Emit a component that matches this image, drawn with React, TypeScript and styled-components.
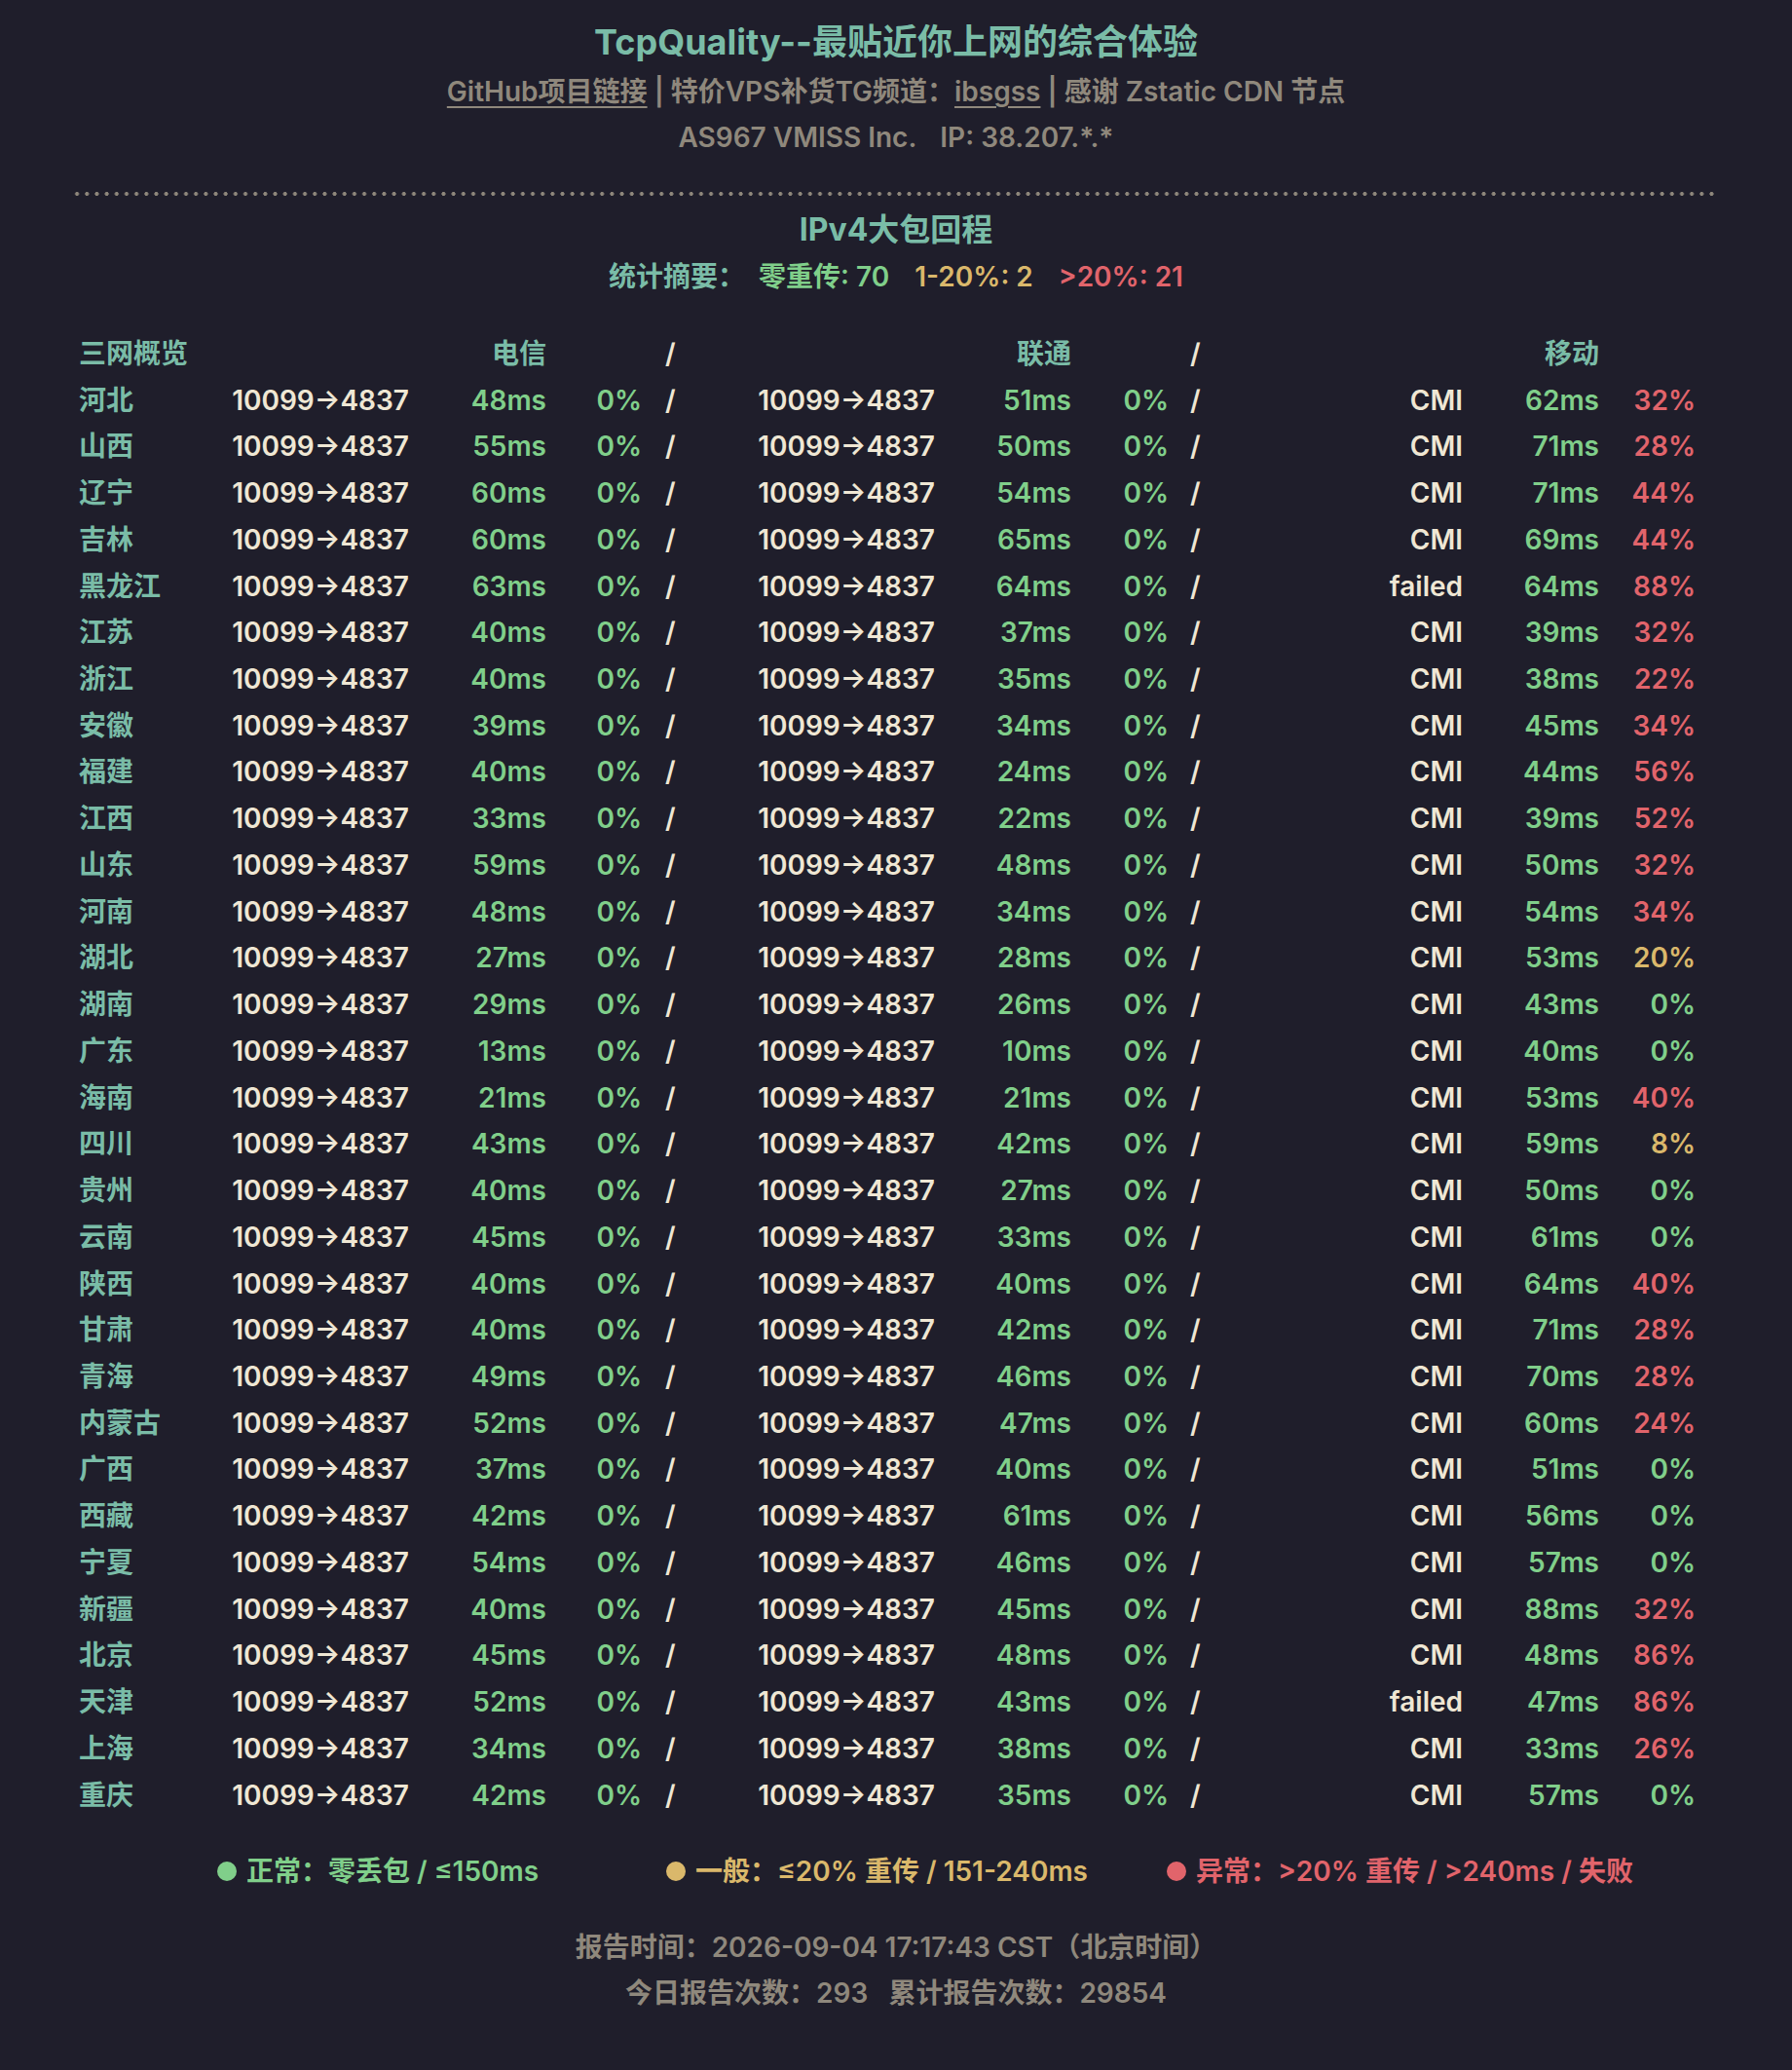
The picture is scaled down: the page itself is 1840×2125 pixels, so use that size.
import React from "react";
import styled, { createGlobalStyle } from "styled-components";

const C = {
  bg: "#1f1e2b",
  teal: "#7abca7",
  green: "#80cf8a",
  yellow: "#dab86b",
  red: "#e1646b",
  cream: "#efe7d4",
  gray: "#8f887c",
};

const Global = createGlobalStyle`
  html, body { margin: 0; padding: 0; background: ${C.bg}; }
  body {
    font-family: Inter, "Noto Sans CJK SC", "Noto Sans", sans-serif;
    font-weight: 600;
    -webkit-font-smoothing: antialiased;
  }
`;

const Page = styled.main`
  min-height: 2125px;
  box-sizing: border-box;
  background: ${C.bg};
  padding-top: 17px;
`;

const Title = styled.h1`
  margin: 0;
  text-align: center;
  font-size: 36px;
  line-height: 52px;
  font-weight: 700;
  color: ${C.teal};
`;

const InfoLine = styled.div<{ $mt?: number }>`
  margin-top: ${(p) => p.$mt ?? 0}px;
  text-align: center;
  font-size: 28px;
  line-height: 47px;
  color: ${C.gray};
  white-space: pre;
`;

const Link = styled.a`
  color: ${C.gray};
  text-decoration: underline;
  text-decoration-thickness: 2px;
  text-underline-offset: 5px;
`;

const Sep = styled.span`
  color: ${C.gray};
`;

const Spaced = styled.span`
  margin-left: 24px;
`;

const Divider = styled.div`
  margin: 32px 80px 0 74px;
  height: 4px;
  background-image: radial-gradient(circle at center, ${C.gray} 1.7px, transparent 2.3px);
  background-size: 10.18px 4px;
  background-repeat: repeat-x;
`;

const SectionTitle = styled.h2`
  margin: 11px 0 0;
  text-align: center;
  font-size: 32px;
  line-height: 48px;
  font-weight: 700;
  color: ${C.teal};
`;

const Summary = styled.div`
  margin-top: 1px;
  display: flex;
  justify-content: center;
  gap: 26px;
  font-size: 28px;
  line-height: 47px;
`;

const Tone = styled.span<{ $c: string; $mr?: number }>`
  color: ${(p) => p.$c};
  margin-right: ${(p) => p.$mr ?? 0}px;
  white-space: pre;
`;

const Table = styled.div`
  margin: 31px 0 0 81px;
  display: grid;
  grid-template-columns: 155px 184px 141px 98px 117px 184px 140px 100px 117px 185px 140px 99px;
  grid-auto-rows: 47.74px;
  align-items: center;
  font-size: 28px;
  line-height: 34px;
`;

const Cell = styled.div<{ $c: string; $right?: boolean; $pad?: number }>`
  color: ${(p) => p.$c};
  text-align: ${(p) => (p.$right ? "right" : "left")};
  padding-left: ${(p) => p.$pad ?? 0}px;
  white-space: nowrap;
`;

const Legend = styled.div`
  margin: 31px 0 0 223px;
  display: grid;
  grid-template-columns: 461px 514px auto;
  font-size: 28px;
  line-height: 47px;
`;

const LegendItem = styled.div<{ $c: string }>`
  display: flex;
  align-items: center;
  gap: 10px;
  color: ${(p) => p.$c};
  white-space: pre;
`;

const Dot = styled.span<{ $c: string }>`
  width: 20px;
  height: 20px;
  border-radius: 50%;
  background: ${(p) => p.$c};
  flex: none;
`;

const Footer = styled.div`
  margin-top: 31px;
  text-align: center;
  font-size: 28px;
  line-height: 47px;
  color: ${C.gray};
`;

type Row = [string, number, number, number, number, string, number, number];

const rows: Row[] = [
  ["河北", 48, 0, 51, 0, "CMI", 62, 32],
  ["山西", 55, 0, 50, 0, "CMI", 71, 28],
  ["辽宁", 60, 0, 54, 0, "CMI", 71, 44],
  ["吉林", 60, 0, 65, 0, "CMI", 69, 44],
  ["黑龙江", 63, 0, 64, 0, "failed", 64, 88],
  ["江苏", 40, 0, 37, 0, "CMI", 39, 32],
  ["浙江", 40, 0, 35, 0, "CMI", 38, 22],
  ["安徽", 39, 0, 34, 0, "CMI", 45, 34],
  ["福建", 40, 0, 24, 0, "CMI", 44, 56],
  ["江西", 33, 0, 22, 0, "CMI", 39, 52],
  ["山东", 59, 0, 48, 0, "CMI", 50, 32],
  ["河南", 48, 0, 34, 0, "CMI", 54, 34],
  ["湖北", 27, 0, 28, 0, "CMI", 53, 20],
  ["湖南", 29, 0, 26, 0, "CMI", 43, 0],
  ["广东", 13, 0, 10, 0, "CMI", 40, 0],
  ["海南", 21, 0, 21, 0, "CMI", 53, 40],
  ["四川", 43, 0, 42, 0, "CMI", 59, 8],
  ["贵州", 40, 0, 27, 0, "CMI", 50, 0],
  ["云南", 45, 0, 33, 0, "CMI", 61, 0],
  ["陕西", 40, 0, 40, 0, "CMI", 64, 40],
  ["甘肃", 40, 0, 42, 0, "CMI", 71, 28],
  ["青海", 49, 0, 46, 0, "CMI", 70, 28],
  ["内蒙古", 52, 0, 47, 0, "CMI", 60, 24],
  ["广西", 37, 0, 40, 0, "CMI", 51, 0],
  ["西藏", 42, 0, 61, 0, "CMI", 56, 0],
  ["宁夏", 54, 0, 46, 0, "CMI", 57, 0],
  ["新疆", 40, 0, 45, 0, "CMI", 88, 32],
  ["北京", 45, 0, 48, 0, "CMI", 48, 86],
  ["天津", 52, 0, 43, 0, "failed", 47, 86],
  ["上海", 34, 0, 38, 0, "CMI", 33, 26],
  ["重庆", 42, 0, 35, 0, "CMI", 57, 0],
];

const lossColor = (v: number) => (v === 0 ? C.green : v <= 20 ? C.yellow : C.red);
const ROUTE = "10099→4837";

export default function App() {
  return (
    <Page>
      <Global />
      <Title>TcpQuality--最贴近你上网的综合体验</Title>
      <InfoLine $mt={2}>
        <Link href="#">GitHub项目链接</Link>
        <Sep> | </Sep>特价VPS补货TG频道：<Link href="#">ibsgss</Link>
        <Sep> | </Sep>感谢 Zstatic CDN 节点
      </InfoLine>
      <InfoLine>
        AS967 VMISS Inc.<Spaced>IP: 38.207.*.*</Spaced>
      </InfoLine>
      <Divider />
      <SectionTitle>IPv4大包回程</SectionTitle>
      <Summary>
        <Tone $c={C.teal} $mr={-12}>统计摘要：</Tone>
        <Tone $c={C.green}>零重传: 70</Tone>
        <Tone $c={C.yellow}>1-20%: 2</Tone>
        <Tone $c={C.red}>&gt;20%: 21</Tone>
      </Summary>
      <Table>
        <Cell $c={C.teal}>三网概览</Cell>
        <Cell $c={C.cream} />
        <Cell $c={C.teal} $right>电信</Cell>
        <Cell $c={C.cream} />
        <Cell $c={C.cream} $pad={24}>/</Cell>
        <Cell $c={C.cream} />
        <Cell $c={C.teal} $right>联通</Cell>
        <Cell $c={C.cream} />
        <Cell $c={C.cream} $pad={22}>/</Cell>
        <Cell $c={C.cream} />
        <Cell $c={C.teal} $right>移动</Cell>
        <Cell $c={C.cream} />
        {rows.map(([p, t, tl, u, ul, m, ml, mll]) => (
          <React.Fragment key={p}>
            <Cell $c={C.teal}>{p}</Cell>
            <Cell $c={C.cream} $right>{ROUTE}</Cell>
            <Cell $c={C.green} $right>{t}ms</Cell>
            <Cell $c={lossColor(tl)} $right>{tl}%</Cell>
            <Cell $c={C.cream} $pad={24}>/</Cell>
            <Cell $c={C.cream} $right>{ROUTE}</Cell>
            <Cell $c={C.green} $right>{u}ms</Cell>
            <Cell $c={lossColor(ul)} $right>{ul}%</Cell>
            <Cell $c={C.cream} $pad={22}>/</Cell>
            <Cell $c={C.cream} $right>{m}</Cell>
            <Cell $c={C.green} $right>{ml}ms</Cell>
            <Cell $c={lossColor(mll)} $right>{mll}%</Cell>
          </React.Fragment>
        ))}
      </Table>
      <Legend>
        <LegendItem $c={C.green}>
          <Dot $c={C.green} />正常：零丢包 / ≤150ms
        </LegendItem>
        <LegendItem $c={C.yellow}>
          <Dot $c={C.yellow} />一般：≤20% 重传 / 151-240ms
        </LegendItem>
        <LegendItem $c={C.red}>
          <Dot $c={C.red} />异常：&gt;20% 重传 / &gt;240ms / 失败
        </LegendItem>
      </Legend>
      <Footer>
        报告时间：2026-09-04 17:17:43 CST（北京时间）
        <br />
        今日报告次数：293&nbsp;&nbsp;&nbsp;累计报告次数：29854
      </Footer>
    </Page>
  );
}
